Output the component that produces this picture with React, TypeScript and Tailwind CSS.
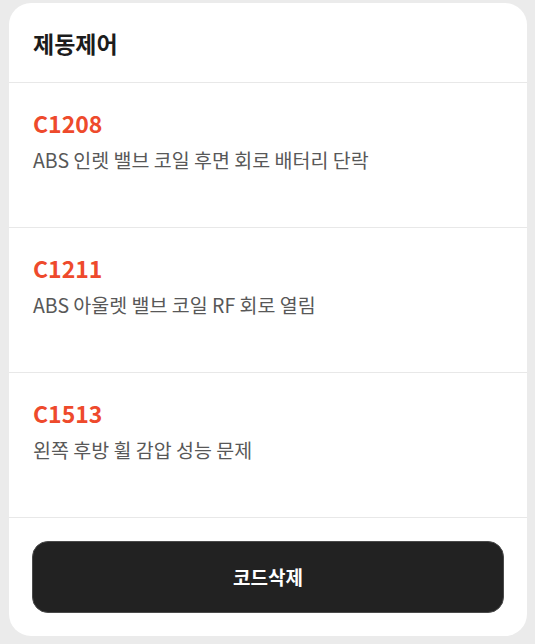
import React from "react";

const items = [
  { code: "C1208", desc: "ABS 인렛 밸브 코일 후면 회로 배터리 단락" },
  { code: "C1211", desc: "ABS 아울렛 밸브 코일 RF 회로 열림" },
  { code: "C1513", desc: "왼쪽 후방 휠 감압 성능 문제" },
];

export default function App() {
  return (
    <div
      className="w-[535px] h-[644px] bg-[#ebebeb] pt-[3px] pl-[9px] pr-[8px]"
      style={{ fontFamily: '"Noto Sans CJK KR", "Noto Sans", sans-serif' }}
    >
      <div className="bg-white rounded-[22px] flex flex-col overflow-hidden">
        <div className="h-[80px] border-b border-[#e8e8e8] flex items-center px-6">
          <h1 className="text-[23px] font-bold text-[#1c1c1c] leading-[30px]">제동제어</h1>
        </div>
        {items.map((it) => (
          <div key={it.code} className="h-[145px] border-b border-[#e8e8e8] px-6 pt-[24px]">
            <div className="text-[23px] font-bold text-[#ee4a2c] leading-[32px]">{it.code}</div>
            <div className="text-[19.5px] text-[#585858] leading-[28px] mt-[7px]">{it.desc}</div>
          </div>
        ))}
        <div className="pt-[23px] pb-[23px] px-[23px]">
          <button className="w-full h-[72px] rounded-[16px] bg-[#222222] border border-[#4a4a4a] text-white text-[19px] font-bold flex items-center justify-center">
            코드삭제
          </button>
        </div>
      </div>
    </div>
  );
}
